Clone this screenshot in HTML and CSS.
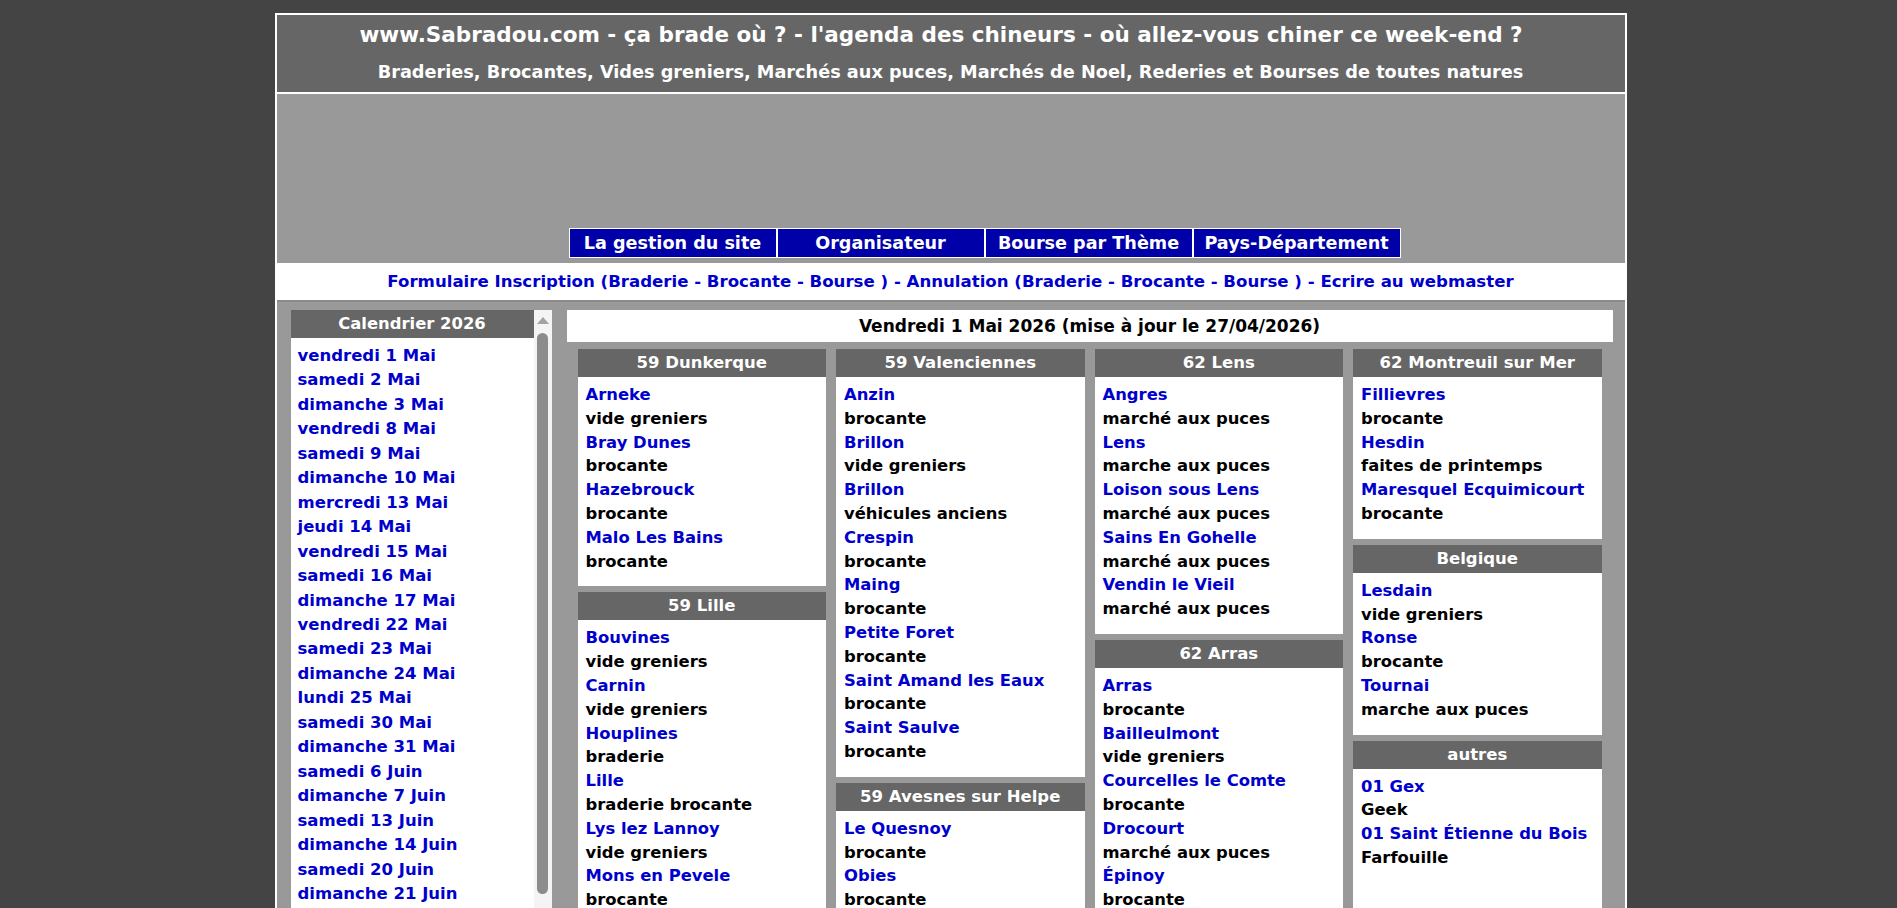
FILE: index.html
```html
<!DOCTYPE html>
<html lang="fr">
<head>
    <meta charset="UTF-8">
    <title>Sabradou - l'agenda des chineurs</title>
    <link rel="stylesheet" href="styles.css">
</head>
<body>
<div class="page">
    <header class="top">
        <h1>www.Sabradou.com - ça brade où ? - l'agenda des chineurs - où allez-vous chiner ce week-end ?</h1>
        <h2>Braderies, Brocantes, Vides greniers, Marchés aux puces, Marchés de Noel, Rederies et Bourses de toutes natures</h2>
    </header>

    <div class="banner">
        <nav class="menu">
            <a href="#">La gestion du site</a>
            <a href="#">Organisateur</a>
            <a href="#">Bourse par Thème</a>
            <a href="#">Pays-Département</a>
        </nav>
    </div>

    <div class="links">
        <a href="#">Formulaire Inscription (Braderie - Brocante - Bourse )</a> -
        <a href="#">Annulation (Braderie - Brocante - Bourse )</a> -
        <a href="#">Ecrire au webmaster</a>
    </div>

    <div class="main">
        <aside class="calendar">
            <div class="cal-box">
                <div class="cal-title">Calendrier 2026</div>
                <ul class="cal-list">
                    <li><a href="#">vendredi 1 Mai</a></li>
                    <li><a href="#">samedi 2 Mai</a></li>
                    <li><a href="#">dimanche 3 Mai</a></li>
                    <li><a href="#">vendredi 8 Mai</a></li>
                    <li><a href="#">samedi 9 Mai</a></li>
                    <li><a href="#">dimanche 10 Mai</a></li>
                    <li><a href="#">mercredi 13 Mai</a></li>
                    <li><a href="#">jeudi 14 Mai</a></li>
                    <li><a href="#">vendredi 15 Mai</a></li>
                    <li><a href="#">samedi 16 Mai</a></li>
                    <li><a href="#">dimanche 17 Mai</a></li>
                    <li><a href="#">vendredi 22 Mai</a></li>
                    <li><a href="#">samedi 23 Mai</a></li>
                    <li><a href="#">dimanche 24 Mai</a></li>
                    <li><a href="#">lundi 25 Mai</a></li>
                    <li><a href="#">samedi 30 Mai</a></li>
                    <li><a href="#">dimanche 31 Mai</a></li>
                    <li><a href="#">samedi 6 Juin</a></li>
                    <li><a href="#">dimanche 7 Juin</a></li>
                    <li><a href="#">samedi 13 Juin</a></li>
                    <li><a href="#">dimanche 14 Juin</a></li>
                    <li><a href="#">samedi 20 Juin</a></li>
                    <li><a href="#">dimanche 21 Juin</a></li>
                </ul>
            </div>
            <div class="scroll">
                <span class="scroll-up"></span>
                <span class="scroll-thumb"></span>
            </div>
        </aside>

        <section class="agenda">
            <div class="day">Vendredi 1 Mai 2026 (mise à jour le 27/04/2026)</div>

            <div class="columns">
                <div class="col">
                    <div class="zone">
                        <div class="zone-title">59 Dunkerque</div>
                        <div class="zone-body">
                            <a href="#">Arneke</a><span>vide greniers</span>
                            <a href="#">Bray Dunes</a><span>brocante</span>
                            <a href="#">Hazebrouck</a><span>brocante</span>
                            <a href="#">Malo Les Bains</a><span>brocante</span>
                        </div>
                    </div>
                    <div class="zone">
                        <div class="zone-title">59 Lille</div>
                        <div class="zone-body">
                            <a href="#">Bouvines</a><span>vide greniers</span>
                            <a href="#">Carnin</a><span>vide greniers</span>
                            <a href="#">Houplines</a><span>braderie</span>
                            <a href="#">Lille</a><span>braderie brocante</span>
                            <a href="#">Lys lez Lannoy</a><span>vide greniers</span>
                            <a href="#">Mons en Pevele</a><span>brocante</span>
                        </div>
                    </div>
                </div>

                <div class="col">
                    <div class="zone">
                        <div class="zone-title">59 Valenciennes</div>
                        <div class="zone-body">
                            <a href="#">Anzin</a><span>brocante</span>
                            <a href="#">Brillon</a><span>vide greniers</span>
                            <a href="#">Brillon</a><span>véhicules anciens</span>
                            <a href="#">Crespin</a><span>brocante</span>
                            <a href="#">Maing</a><span>brocante</span>
                            <a href="#">Petite Foret</a><span>brocante</span>
                            <a href="#">Saint Amand les Eaux</a><span>brocante</span>
                            <a href="#">Saint Saulve</a><span>brocante</span>
                        </div>
                    </div>
                    <div class="zone">
                        <div class="zone-title">59 Avesnes sur Helpe</div>
                        <div class="zone-body">
                            <a href="#">Le Quesnoy</a><span>brocante</span>
                            <a href="#">Obies</a><span>brocante</span>
                        </div>
                    </div>
                </div>

                <div class="col">
                    <div class="zone">
                        <div class="zone-title">62 Lens</div>
                        <div class="zone-body">
                            <a href="#">Angres</a><span>marché aux puces</span>
                            <a href="#">Lens</a><span>marche aux puces</span>
                            <a href="#">Loison sous Lens</a><span>marché aux puces</span>
                            <a href="#">Sains En Gohelle</a><span>marché aux puces</span>
                            <a href="#">Vendin le Vieil</a><span>marché aux puces</span>
                        </div>
                    </div>
                    <div class="zone">
                        <div class="zone-title">62 Arras</div>
                        <div class="zone-body">
                            <a href="#">Arras</a><span>brocante</span>
                            <a href="#">Bailleulmont</a><span>vide greniers</span>
                            <a href="#">Courcelles le Comte</a><span>brocante</span>
                            <a href="#">Drocourt</a><span>marché aux puces</span>
                            <a href="#">Épinoy</a><span>brocante</span>
                        </div>
                    </div>
                </div>

                <div class="col">
                    <div class="zone">
                        <div class="zone-title">62 Montreuil sur Mer</div>
                        <div class="zone-body">
                            <a href="#">Fillievres</a><span>brocante</span>
                            <a href="#">Hesdin</a><span>faites de printemps</span>
                            <a href="#">Maresquel Ecquimicourt</a><span>brocante</span>
                        </div>
                    </div>
                    <div class="zone">
                        <div class="zone-title">Belgique</div>
                        <div class="zone-body">
                            <a href="#">Lesdain</a><span>vide greniers</span>
                            <a href="#">Ronse</a><span>brocante</span>
                            <a href="#">Tournai</a><span>marche aux puces</span>
                        </div>
                    </div>
                    <div class="zone">
                        <div class="zone-title">autres</div>
                        <div class="zone-body">
                            <a href="#">01 Gex</a><span>Geek</span>
                            <a href="#">01 Saint Étienne du Bois</a><span>Farfouille</span>
                        </div>
                    </div>
                </div>
            </div>
        </section>
    </div>
</div>
</body>
</html>
```

FILE: styles.css
```css
html, body {
    margin: 0;
}

body {
    background-color: #444;
    font-family: 'DejaVu Sans', Verdana, sans-serif;
    font-weight: bold;
}

a {
    color: #0000cc;
    text-decoration: none;
}

.page {
    width: 1352px;
    margin: 13px 0 0 calc(50% - 674px);
    border: 2px solid #fff;
    border-bottom: none;
    box-sizing: border-box;
}

/* titre */
.top {
    background-color: #666;
    color: #fff;
    text-align: center;
    padding: 7px 0 9px;
    border-bottom: 2px solid #fff;
}

.top h1 {
    font-size: 21.5px;
    line-height: 26px;
    margin: 0 0 13px;
    padding-right: 19px;
}

.top h2 {
    font-size: 17.7px;
    line-height: 22px;
    margin: 0;
}

/* bandeau + menu */
.banner {
    background-color: #999;
    height: 169px;
    display: flex;
    align-items: flex-end;
    padding-bottom: 5px;
    box-sizing: border-box;
}

.menu {
    display: flex;
    margin-left: 292px;
}

.menu a {
    width: 208px;
    height: 30px;
    box-sizing: border-box;
    border: 1px solid #fff;
    background-color: #0000a8;
    color: #fff;
    font-size: 17.6px;
    display: flex;
    justify-content: center;
    align-items: center;
}

.links {
    background-color: #fff;
    color: #0000cc;
    height: 37px;
    line-height: 37px;
    text-align: center;
    font-size: 16.6px;
}

/* contenu */
.main {
    background-color: #999;
    border-top: 2px solid #8a8a8a;
    padding: 8px 12px 0 14px;
    display: flex;
    gap: 15px;
}

.calendar {
    width: 261px;
    display: flex;
    flex-shrink: 0;
}

.cal-box {
    flex: 1;
    background-color: #fff;
}

.cal-title {
    background-color: #666;
    color: #fff;
    text-align: center;
    font-size: 16.4px;
    height: 28px;
    line-height: 28px;
}

.cal-list {
    list-style: none;
    margin: 0;
    padding: 6px 7px 10px;
    font-size: 16.5px;
    line-height: 24.45px;
}

.scroll {
    width: 18px;
    background-color: #f4f4f4;
    display: flex;
    flex-direction: column;
    align-items: center;
}

.scroll-up {
    margin-top: 7px;
    border-left: 6px solid transparent;
    border-right: 6px solid transparent;
    border-bottom: 7px solid #a3a3a3;
}

.scroll-thumb {
    width: 11px;
    height: 561px;
    margin-top: 9px;
    border-radius: 6px;
    background-color: #8c8c8c;
}

.agenda {
    flex: 1;
    display: flex;
    flex-direction: column;
    gap: 7px;
}

.day {
    background-color: #fff;
    color: #000;
    text-align: center;
    font-size: 17px;
    height: 32px;
    line-height: 32px;
}

.columns {
    display: grid;
    grid-template-columns: repeat(4, 1fr);
    column-gap: 10px;
    padding: 0 11px;
}

.col {
    display: flex;
    flex-direction: column;
    gap: 6px;
}

.zone {
    display: flex;
    flex-direction: column;
}

.zone:last-child {
    flex: 1;
}

.zone-title {
    background-color: #666;
    color: #fff;
    text-align: center;
    font-size: 16.5px;
    height: 28px;
    line-height: 28px;
}

.zone-body {
    flex: 1;
    background-color: #fff;
    padding: 6px 8px 13px;
    font-size: 16.4px;
    line-height: 23.8px;
}

.zone-body a,
.zone-body span {
    display: block;
}

.zone-body span {
    color: #000;
}
```
